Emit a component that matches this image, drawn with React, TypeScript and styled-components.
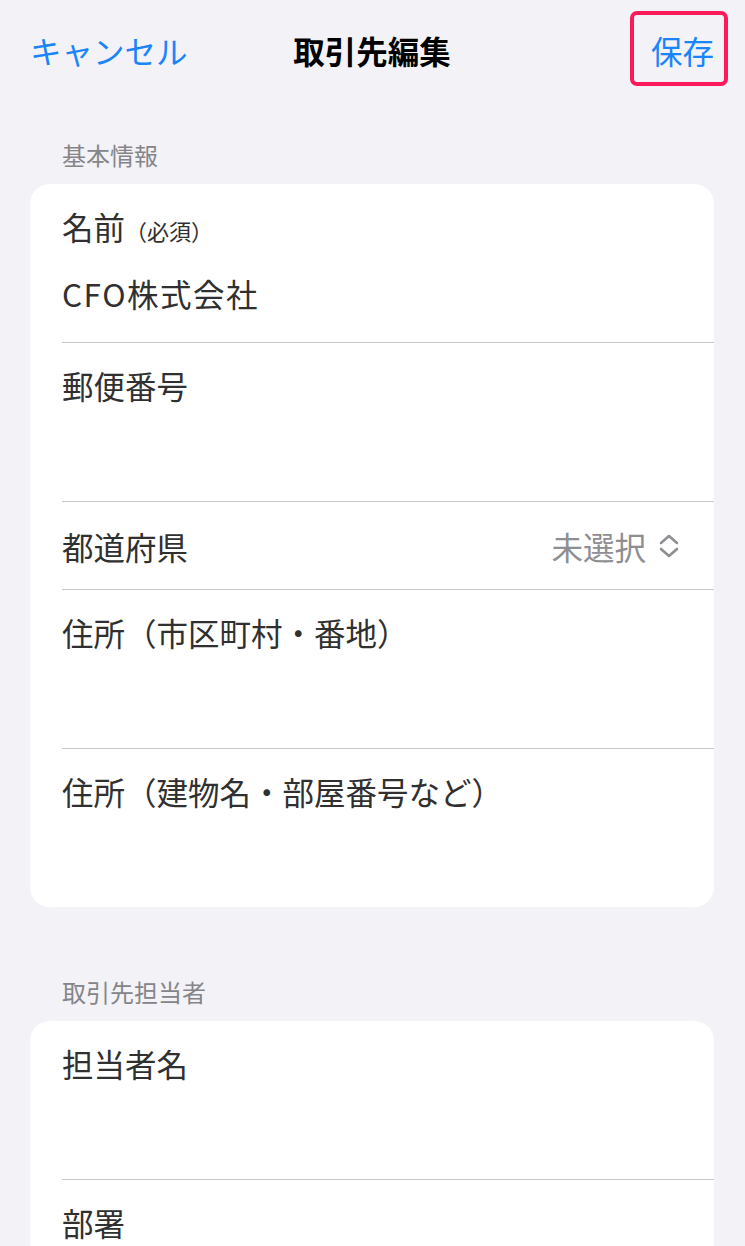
import styled, { createGlobalStyle } from "styled-components"

const GlobalStyle = createGlobalStyle`
html, body {
  margin: 0;
  padding: 0;
  background: #f2f2f7;
  overflow: hidden;
}
body {
  font-family: "Noto Sans CJK JP", "Noto Sans", sans-serif;
}
`

const Page = styled.div`
width: 745px;
height: 1246px;
overflow: hidden;
background: #f2f2f7;
display: flex;
flex-direction: column;
& > * {
  flex-shrink: 0;
}
`

const Header = styled.header`
height: 100px;
display: grid;
grid-template-columns: 1fr auto 1fr;
align-items: center;
padding: 0 31px 0 30px;
`

const NavButton = styled.span<{ $align: "left" | "right" }>`
justify-self: ${p => (p.$align === "left" ? "start" : "end")};
font-size: 31.5px;
line-height: 40px;
color: #1a84fb;
position: relative;
`

const Highlight = styled.span`
position: absolute;
top: -19px;
bottom: -16px;
left: -21px;
right: -14px;
border: 4px solid #fd1a5c;
border-radius: 7px;
`

const Title = styled.h1`
margin: 0;
font-size: 31.5px;
line-height: 40px;
font-weight: 700;
color: #000;
`

const Section = styled.section<{ $top: number }>`
margin-top: ${p => p.$top}px;
padding: 0 31px 0 30px;
`

const SectionLabel = styled.div`
margin: 0 0 16px 32px;
font-size: 24px;
line-height: 26px;
color: #858589;
`

const Card = styled.div`
background: #fff;
border-radius: 20px;
overflow: hidden;
`

const Row = styled.div`
margin-left: 32px;
border-bottom: 1px solid #c8c8cb;
&:last-child {
  border-bottom: none;
}
`

const FieldRow = styled(Row)`
padding-top: 24px;
`

const Label = styled.div`
font-size: 31.5px;
line-height: 36px;
height: 36px;
color: #303030;
`

const Note = styled.span`
font-size: 22px;
line-height: 1;
`

const InputArea = styled.div`
height: 98px;
display: flex;
align-items: center;
font-size: 31.5px;
color: #303030;
`

const Value = styled.span`
letter-spacing: 1.5px;
`

const PickerRow = styled(Row)`
height: 88px;
box-sizing: border-box;
display: flex;
align-items: center;
justify-content: space-between;
padding-right: 34px;
`

const PickerValue = styled.div`
display: flex;
align-items: center;
gap: 12px;
font-size: 31.5px;
color: #8e8e93;
`

const Chevrons = () => (
  <svg width="22" height="26" viewBox="0 0 22 26" fill="none">
    <path d="M3 10 L11 3 L19 10" stroke="#8e8e93" strokeWidth="2.6" strokeLinecap="round" strokeLinejoin="round" />
    <path d="M3 16 L11 23 L19 16" stroke="#8e8e93" strokeWidth="2.6" strokeLinecap="round" strokeLinejoin="round" />
  </svg>
)

const TextField = ({ label, note, value }: { label: string; note?: string; value?: string }) => (
  <FieldRow>
    <Label>
      {label}
      {note && <Note>{note}</Note>}
    </Label>
    <InputArea>{value && <Value>{value}</Value>}</InputArea>
  </FieldRow>
)

const App = () => {
  return (
    <>
      <GlobalStyle />
      <Page>
        <Header>
          <NavButton $align="left">キャンセル</NavButton>
          <Title>取引先編集</Title>
          <NavButton $align="right">
            保存
            <Highlight />
          </NavButton>
        </Header>

        <Section $top={42}>
          <SectionLabel>基本情報</SectionLabel>
          <Card>
            <TextField label="名前" note="（必須）" value="CFO株式会社" />
            <TextField label="郵便番号" />
            <PickerRow>
              <Label>都道府県</Label>
              <PickerValue>
                未選択
                <Chevrons />
              </PickerValue>
            </PickerRow>
            <TextField label="住所（市区町村・番地）" />
            <TextField label="住所（建物名・部屋番号など）" />
          </Card>
        </Section>

        <Section $top={72}>
          <SectionLabel>取引先担当者</SectionLabel>
          <Card>
            <TextField label="担当者名" />
            <TextField label="部署" />
          </Card>
        </Section>
      </Page>
    </>
  )
}

export default App
